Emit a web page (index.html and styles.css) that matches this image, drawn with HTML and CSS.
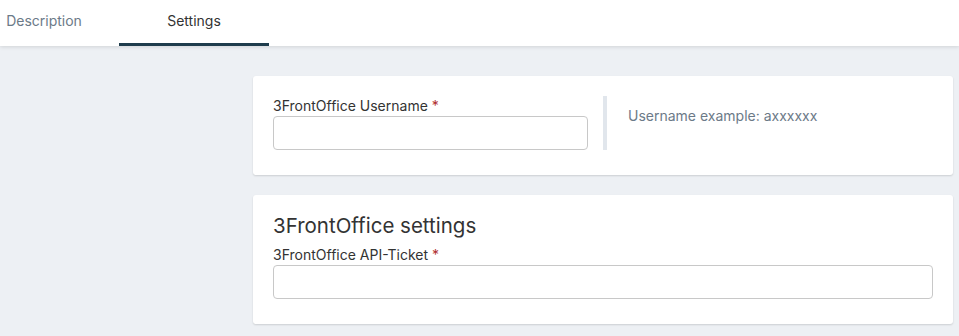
FILE: index.html
```html
<!doctype html>
<html lang="en">
<head>
    <meta charset="UTF-8">
    <title>3FrontOffice</title>
    <link rel="stylesheet" href="styles.css">
</head>
<body>

    <div class="topbar">
        <ul class="tabs">
            <li><a href="javascript:void(0)">Description</a></li>
            <li class="active"><a href="javascript:void(0)">Settings</a></li>
        </ul>
    </div>

    <div class="page">
        <div class="sidebar"></div>
        <div class="main">
            <div class="card">
                <div class="row">
                    <div class="field">
                        <label>3FrontOffice Username <span class="req">*</span></label>
                        <input type="text">
                    </div>
                    <div class="help">Username example: axxxxxx</div>
                </div>
            </div>

            <div class="card">
                <h2>3FrontOffice settings</h2>
                <div class="field">
                    <label>3FrontOffice API-Ticket <span class="req">*</span></label>
                    <input type="text">
                </div>
            </div>
        </div>
    </div>

</body>
</html>
```
FILE: styles.css
```css
*{
    padding: 0;
    margin: 0;
    box-sizing: border-box;
}
body{
    font-family: Inter, "Liberation Sans", sans-serif;
    background-color: #edf0f4;
    color: #333;
    height: 336px;
    overflow: hidden;
}
ul,li{
    list-style: none;
}
a{
    text-decoration: none;
}
.topbar{
    height: 46px;
    background-color: #fff;
    box-shadow: 0 1px 4px rgba(0,0,0,0.12);
    position: relative;
}
.tabs{
    display: flex;
    margin-left: -31px;
}
.tabs li a{
    display: block;
    width: 150px;
    height: 46px;
    line-height: 42px;
    text-align: center;
    font-size: 14px;
    color: #6c7a88;
    border-bottom: 3px solid transparent;
}
.tabs li.active a{
    color: #333;
    border-bottom-color: #1e3c4c;
}

.page{
    display: grid;
    grid-template-columns: 253px 1fr;
    padding: 30px 6px 0 0;
}
.card{
    background-color: #fff;
    border-radius: 3px;
    box-shadow: 0 1px 2px rgba(0,0,0,0.14);
    padding: 20px 20px 25px;
    margin-bottom: 20px;
}
.row{
    display: flex;
}
.row .field{
    width: 315px;
}
.field label{
    display: block;
    font-size: 14px;
    line-height: 20px;
    color: #333;
}
.req{
    color: #b03030;
}
.field input{
    display: block;
    width: 100%;
    height: 34px;
    border: 1px solid #c8c8c8;
    border-radius: 4px;
    background: #fff;
}
.help{
    margin-left: 15px;
    border-left: 4px solid #e1e6ec;
    padding: 10px 0 0 21px;
    font-size: 14px;
    line-height: 20px;
    color: #6c7a88;
}
.card h2{
    font-size: 20.5px;
    font-weight: normal;
    line-height: 28px;
    margin-top: -3px;
    margin-bottom: 5px;
    color: #333;
}
```
